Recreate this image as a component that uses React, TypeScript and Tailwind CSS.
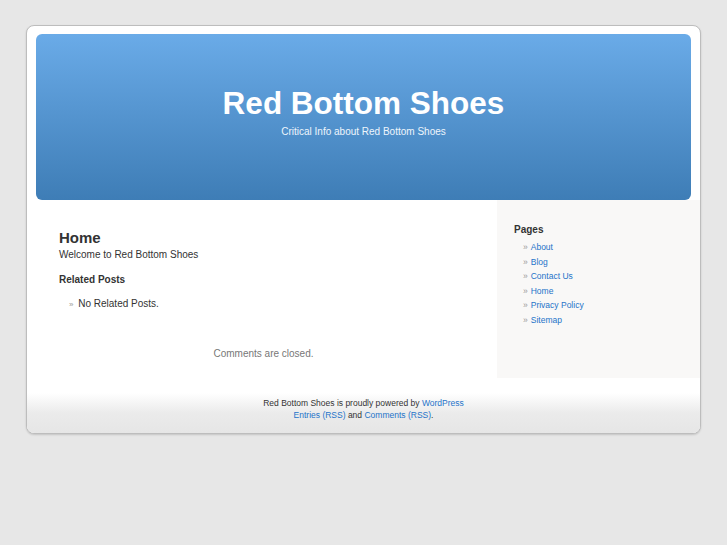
import React from "react";

const pages = ["About", "Blog", "Contact Us", "Home", "Privacy Policy", "Sitemap"];

export default function App() {
  return (
    <div className="min-h-[545px] bg-[#e7e7e7] pt-[25px] pl-[26px] font-['Liberation_Sans',Arial,sans-serif]">
      <div className="w-[675px] h-[409px] rounded-[8px] border border-[#bdbdbd] bg-white shadow-[0_1px_2px_rgba(0,0,0,0.15)] overflow-hidden flex flex-col">
        <div className="pt-[8px] px-[9px]">
          <div className="h-[166px] rounded-[6px] bg-gradient-to-b from-[#6aabe8] to-[#3e7db6] flex flex-col items-center text-white">
            <h1 className="mt-[50px] text-[31.5px] font-bold leading-[38px]">Red Bottom Shoes</h1>
            <p className="mt-[3px] text-[10px] leading-[13px] text-[#eef5fc]">Critical Info about Red Bottom Shoes</p>
          </div>
        </div>

        <div className="flex h-[178px]">
          <div className="w-[470px] pl-[32px] pt-[29px]">
            <h2 className="text-[15px] font-bold leading-[18px] text-[#333]">Home</h2>
            <p className="mt-[1px] text-[10px] leading-[14px] text-[#333]">Welcome to Red Bottom Shoes</p>
            <h3 className="mt-[11px] text-[10px] font-bold leading-[14px] text-[#333]">Related Posts</h3>
            <p className="mt-[10px] pl-[10px] text-[10px] leading-[14px] text-[#333]">
              <span className="text-[#999] text-[8px] mr-[2px]">»</span> No Related Posts.
            </p>
            <p className="mt-[35px] text-center pr-[29px] text-[10px] leading-[14px] text-[#777]">Comments are closed.</p>
          </div>
          <div className="flex-1 bg-[#f9f8f7] pl-[17px] pt-[23px]">
            <h2 className="text-[10px] font-bold leading-[14px] text-[#333]">Pages</h2>
            <ul className="mt-[3px] pl-[9px]">
              {pages.map((p) => (
                <li key={p} className="text-[8.5px] leading-[14.5px]">
                  <span className="text-[#999] mr-[3px]">»</span>
                  <a href="#" className="text-[#2473c9]">{p}</a>
                </li>
              ))}
            </ul>
          </div>
        </div>

        <div className="mt-[15px] flex-1 bg-gradient-to-b from-white via-[#ebebeb] via-50% to-[#e6e6e6] pt-[5px] text-center text-[8.5px] leading-[11.5px] text-[#333]">
          <p>
            Red Bottom Shoes is proudly powered by <a href="#" className="text-[#2473c9]">WordPress</a>
          </p>
          <p>
            <a href="#" className="text-[#2473c9]">Entries (RSS)</a> and{" "}
            <a href="#" className="text-[#2473c9]">Comments (RSS)</a>.
          </p>
        </div>
      </div>
    </div>
  );
}
